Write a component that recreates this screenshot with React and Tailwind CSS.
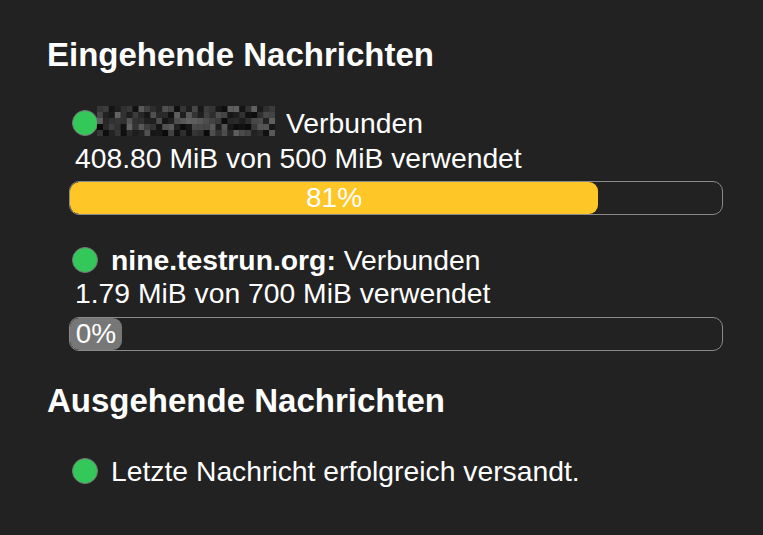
import React from 'react';

// pixelated (redacted) account name
function Redacted() {
  const cols = 30;
  const rows = 5;
  const cells = [];
  let seed = 7;
  for (let r = 0; r < rows; r++) {
    for (let c = 0; c < cols; c++) {
      seed = (seed * 9301 + 49297) % 233280;
      const v = 10 + Math.floor((seed / 233280) * 90);
      cells.push(<rect key={r + '-' + c} x={c * 6} y={r * 6} width="6" height="6" fill={`rgb(${v},${v},${v})`} />);
    }
  }
  return (
    <svg width="178" height="30" viewBox="0 0 180 30" preserveAspectRatio="none" className="block -mt-[5px] -ml-[1px]">
      {cells}
    </svg>
  );
}

function Dot() {
  return <span className="inline-block w-[26px] h-[26px] rounded-full bg-[#34c759] border border-[#777] shrink-0" />;
}

function Bar({ pct }) {
  return (
    <div className="h-[34px] rounded-[10px] border border-[#8a8a8a] overflow-hidden">
      <div
        className={'h-full rounded-[9px] flex items-center justify-center text-white text-[28px] leading-none min-w-[52px] ' + (pct > 0 ? 'bg-[#ffc627]' : 'bg-[#777]')}
        style={{ width: pct + '%' }}
      >
        {pct}%
      </div>
    </div>
  );
}

export default function App() {
  return (
    <div className="w-[763px] h-[535px] bg-[#222222] text-white pl-[47px] pr-[40px] pt-[35px]" style={{ fontFamily: '"Liberation Sans", Arial, sans-serif' }}>
      <h2 className="text-[33px] font-bold leading-[40px]">Eingehende Nachrichten</h2>
      <div className="pl-[22px] pt-[32px]">
        <div className="flex items-center h-[32px] pl-[3px] text-[28.3px]">
          <Dot />
          <Redacted />
          <span className="ml-[11px]">Verbunden</span>
        </div>
        <div className="text-[28.3px] leading-[32px] pl-[6px] mt-[3px]">408.80 MiB von 500 MiB verwendet</div>
        <div className="mt-[7px]">
          <Bar pct={81} />
        </div>

        <div className="flex items-center gap-[13px] h-[32px] pl-[3px] text-[28.3px] mt-[29px]">
          <Dot />
          <span><b>nine.testrun.org:</b> Verbunden</span>
        </div>
        <div className="text-[28.3px] leading-[32px] pl-[6px] mt-[1px]">1.79 MiB von 700 MiB verwendet</div>
        <div className="mt-[8px]">
          <Bar pct={0} />
        </div>
      </div>

      <h2 className="text-[33px] font-bold leading-[40px] mt-[30px]">Ausgehende Nachrichten</h2>
      <div className="flex items-center gap-[13px] h-[32px] pl-[25px] text-[28.3px] mt-[34px]">
        <Dot />
        <span>Letzte Nachricht erfolgreich versandt.</span>
      </div>
    </div>
  );
}
